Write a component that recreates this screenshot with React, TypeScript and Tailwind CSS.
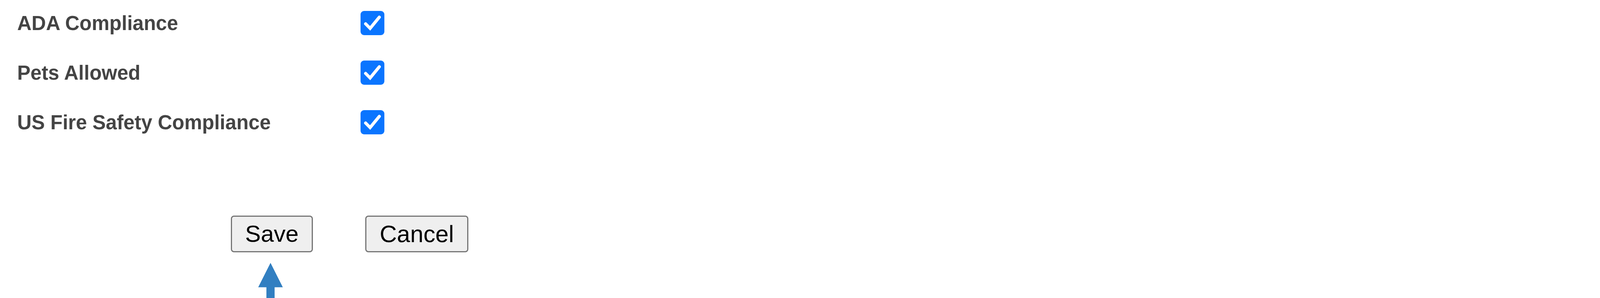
const amenities = ["ADA Compliance", "Pets Allowed", "US Fire Safety Compliance"];

function CheckBox() {
  return (
    <svg width="61" height="62" viewBox="0 0 61 62" className="block">
      <rect x="0" y="0" width="61" height="62" rx="9" fill="#0a75ff" />
      <path
        d="M13 33L24.5 44.5L48 16"
        fill="none"
        stroke="#fff"
        strokeWidth="8"
        strokeLinecap="round"
        strokeLinejoin="miter"
      />
    </svg>
  );
}

export default function App() {
  return (
    <div className="h-[763px] w-full overflow-hidden bg-white font-['Liberation_Sans',Arial,sans-serif]">
      <div className="flex flex-col gap-[65px] pl-[44px] pt-[28px]">
        {amenities.map((name) => (
          <div key={name} className="grid h-[62px] grid-cols-[879px_auto] items-center">
            <span className="text-[51px] font-bold leading-none text-[#444]">{name}</span>
            <CheckBox />
          </div>
        ))}
      </div>

      <div className="mt-[208px] flex gap-[134px] pl-[591px]">
        <button className="h-[94px] w-[210px] rounded-[8px] border-[3px] border-[#767676] bg-[#efefef] text-[60px] leading-none text-black">
          Save
        </button>
        <button className="h-[94px] w-[264px] rounded-[8px] border-[3px] border-[#767676] bg-[#efefef] text-[61px] leading-none text-black">
          Cancel
        </button>
      </div>

      <div className="mt-[27px] pl-[661px]">
        <svg width="63" height="94" viewBox="0 0 63 94" className="block">
          <path d="M31.5 0L63 62.5H42V94H21V62.5H0Z" fill="#327fc1" />
        </svg>
      </div>
    </div>
  );
}
